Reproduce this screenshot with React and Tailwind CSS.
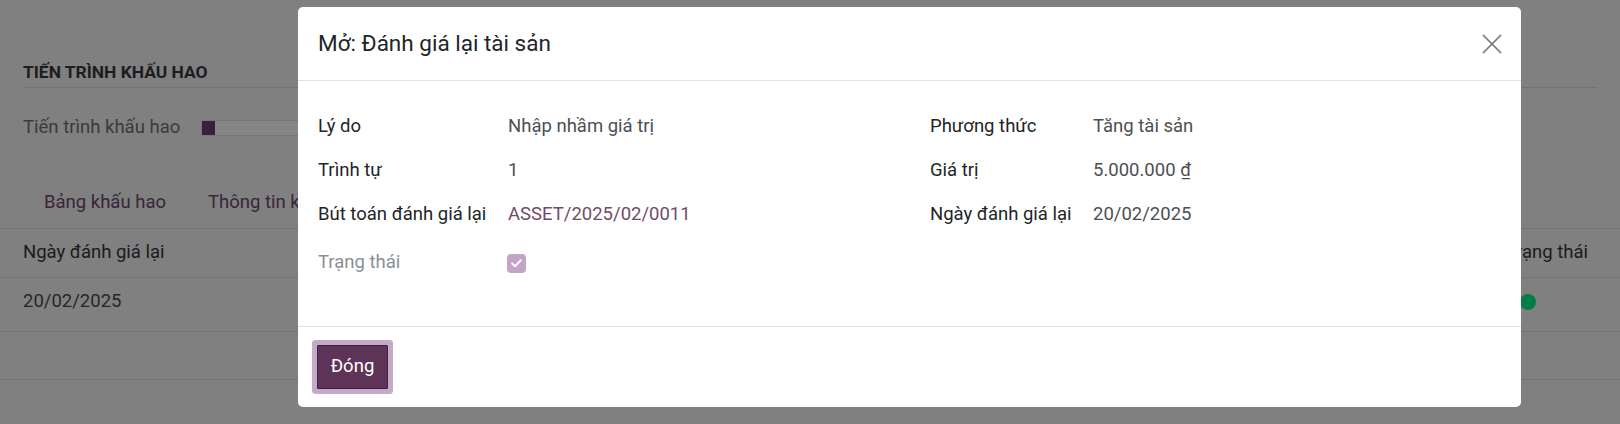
import { Check } from "lucide-react";

const leftFields = [
  { label: "Lý do", value: "Nhập nhầm giá trị" },
  { label: "Trình tự", value: "1" },
  { label: "Bút toán đánh giá lại", value: "ASSET/2025/02/0011", link: true },
];

const rightFields = [
  { label: "Phương thức", value: "Tăng tài sản" },
  { label: "Giá trị", value: "5.000.000 ₫" },
  { label: "Ngày đánh giá lại", value: "20/02/2025" },
];

function FieldRow({ label, value, link, labelWidth }) {
  return (
    <div className="flex h-[44px] items-center">
      <div className={`${labelWidth} shrink-0 text-[#212529]`}>{label}</div>
      <div className={link ? "text-[#714b67]" : "text-[#4b4f54]"}>{value}</div>
    </div>
  );
}

function BackgroundPage() {
  return (
    <div className="h-[424px] w-full overflow-hidden bg-[#808080] text-[18.5px]">
      <div className="px-[23px] pt-[57px]">
        <div className="flex h-[31px] items-center border-b border-[#747474] text-[17.4px] font-bold text-[#1c1d1f]">
          TIẾN TRÌNH KHẤU HAO
        </div>
        <div className="mt-[27px] flex h-[26px] items-center gap-[21px]">
          <span className="text-[#3a3a3c]">Tiến trình khấu hao</span>
          <div className="flex h-[16px] w-[400px] border border-[#777] bg-[#868686]">
            <div className="h-full w-[13px] bg-[#3a2038]" />
          </div>
        </div>
      </div>
      <div className="mt-[36px] flex h-[52px] items-center gap-[42px] border-b border-[#747474] px-[44px] text-[#38253a]">
        <span>Bảng khấu hao</span>
        <span>Thông tin khấu hao</span>
      </div>
      <div className="flex h-[49px] items-center justify-between border-b border-[#747474] pl-[23px] pr-[32px] text-[#1a1b1e]">
        <span>Ngày đánh giá lại</span>
        <span>Trạng thái</span>
      </div>
      <div className="flex h-[54px] items-center justify-between border-b border-[#747474] px-[23px] pb-[5px] text-[#26272a]">
        <span>20/02/2025</span>
        <span className="mr-[61px] h-[16px] w-[16px] rounded-full bg-[#067c46]" />
      </div>
      <div className="h-[48px] border-b border-[#747474]" />
    </div>
  );
}

export default function App() {
  return (
    <div className="relative h-[424px] w-[1620px] overflow-hidden" style={{ fontFamily: "Roboto, 'Noto Sans', sans-serif" }}>
      <BackgroundPage />

      <div className="absolute left-[298px] top-[7px] w-[1223px] rounded-[5px] bg-white text-[18.5px]">
        <div className="flex h-[74px] items-center justify-between border-b border-[#dee2e6] pl-[20px] pr-[19px]">
          <h2 className="text-[22.5px] text-[#212529]">Mở: Đánh giá lại tài sản</h2>
          <button className="text-[#777]">
            <svg width="20" height="20" viewBox="0 0 20 20" fill="none" stroke="currentColor" strokeWidth="1.7">
              <path d="M1 1L19 19M19 1L1 19" />
            </svg>
          </button>
        </div>

        <div className="grid grid-cols-[612px_1fr] px-[20px] pb-[41px] pt-[24px]">
          <div>
            {leftFields.map((f) => (
              <FieldRow key={f.label} {...f} labelWidth="w-[190px]" />
            ))}
            <div className="mt-[4px] flex h-[44px] items-center">
              <div className="w-[189px] shrink-0 text-[#8b8f94]">Trạng thái</div>
              <div className="flex h-[19px] w-[19px] items-center justify-center rounded-[4px] bg-[#c3a4c5]">
                <Check size={13} strokeWidth={3.5} className="text-white" />
              </div>
            </div>
          </div>
          <div>
            {rightFields.map((f) => (
              <FieldRow key={f.label} {...f} labelWidth="w-[163px]" />
            ))}
          </div>
        </div>

        <div className="flex h-[81px] items-center border-t border-[#dee2e6] px-[19px]">
          <button className="h-[44px] w-[71px] rounded-[1px] border border-[#3f2440] bg-[#5e3358] text-white shadow-[0_0_0_5px_#c6a8c9]">
            Đóng
          </button>
        </div>
      </div>
    </div>
  );
}
